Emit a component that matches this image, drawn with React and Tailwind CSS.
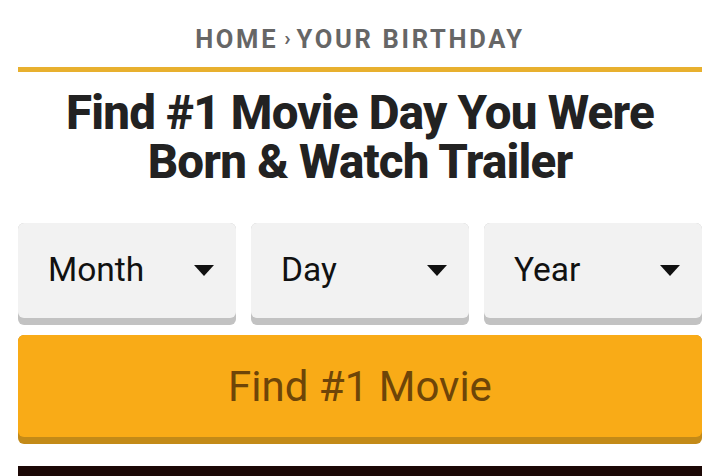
import React from 'react';

function Caret() {
  return (
    <svg width="20" height="11" viewBox="0 0 20 11" className="shrink-0">
      <polygon points="0,0 20,0 10,11" fill="#111" />
    </svg>
  );
}

function SelectBox({ label }) {
  return (
    <div className="flex h-[102px] flex-col rounded-md bg-[#c2c2c2]">
      <div className="flex h-[95px] items-center justify-between rounded-md bg-[#f2f2f2] pl-[30px] pr-[22px]">
        <span className="text-[33.5px] text-[#111]">{label}</span>
        <Caret />
      </div>
    </div>
  );
}

export default function App() {
  return (
    <div className="h-[476px] w-[720px] overflow-hidden bg-white px-[18px] font-['Roboto','Liberation_Sans',sans-serif]">
      {/* Fil d'Ariane */}
      <div className="flex h-[67px] items-center justify-center pt-[11px] text-[25.5px] font-bold tracking-[2.7px] text-[#666]">
        HOME<span className="mx-[6px] text-[21px] tracking-normal">›</span>YOUR BIRTHDAY
      </div>
      <div className="h-[5px] bg-[#e8b02e]" />

      {/* Titre */}
      <h1 className="mt-[17px] text-center text-[47.5px] font-extrabold leading-[49px] tracking-[-0.8px] text-[#222]">
        Find #1 Movie Day You Were
        <br />
        Born &amp; Watch Trailer
      </h1>

      {/* Sélecteurs */}
      <div className="mt-[36px] grid grid-cols-3 gap-[15px]">
        <SelectBox label="Month" />
        <SelectBox label="Day" />
        <SelectBox label="Year" />
      </div>

      {/* Bouton */}
      <div className="mt-[10px] h-[109px] rounded-md bg-[#c38a18]">
        <div className="flex h-[102px] items-center justify-center rounded-md bg-[#f9ab17] text-[42px] text-[#6e4508]">
          Find #1 Movie
        </div>
      </div>

      <div className="mt-[22px] h-[20px] bg-[#1c0806]" />
    </div>
  );
}
